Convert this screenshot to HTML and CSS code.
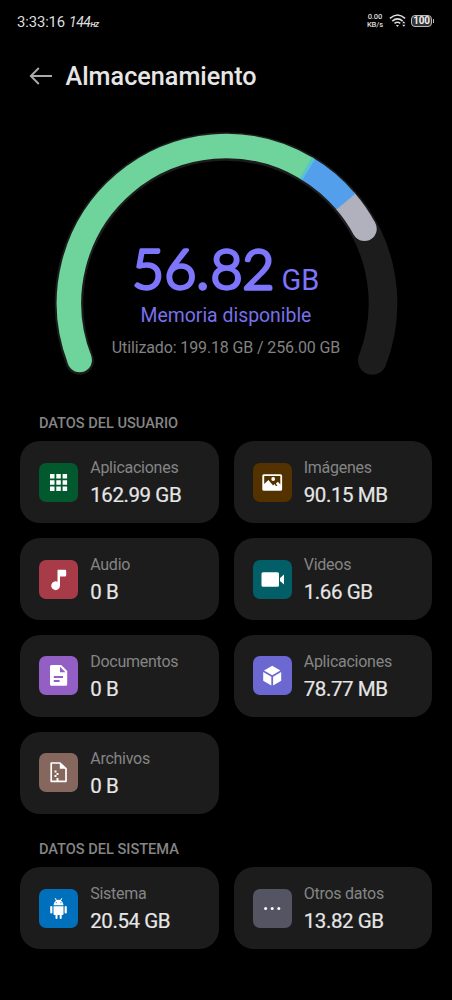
FILE: index.html
```html
<!DOCTYPE html>
<html lang="es">
<head>
<meta charset="utf-8">
<meta name="viewport" content="width=device-width">
<title>Almacenamiento</title>
<link rel="stylesheet" href="styles.css">
</head>
<body>
<div class="status">
  <span class="time">3:33:16</span>
  <span class="rate">144<small>HZ</small></span>
  <span class="speed"><span>0.00</span><span>KB/s</span></span>
  <svg class="wifi" width="18" height="14" viewBox="0 0 18 14">
    <g fill="none" stroke="#ddd" stroke-width="1.6"><path d="M.9 4.3Q8.5-2.3 16.100 4.300"/><path d="M3.300 7.100Q8.500 2.700 13.700 7.100"/><path d="M5.500 9.400Q8.500 7.100 11.300 9.300"/></g>
    <path d="M6.900 11h3l-1.500 1.900zM13.200 9.200l1.600-2 1.600 2zM13.200 10.700h3.200l-1.600 2z" fill="#ddd"/>
  </svg>
  <span class="battery">100</span>
</div>
<header class="header">
  <svg width="24" height="20" viewBox="0 0 24 20" fill="none" stroke="#aaa" stroke-width="1.9"><path d="M23 10H2M9.800 2L1.800 10l8 8"/></svg>
  <h1>Almacenamiento</h1>
</header>
<section class="gauge">
  <svg class="arc" width="360" height="260" viewBox="46 122 360 260" fill="none">
    <path d="M79.700 360.500A157 157 0 1 1 372.300 360.500" stroke="#1c1c1c" stroke-width="28.600" stroke-linecap="round"/>
    <path d="M345 200.600A157 157 0 0 1 364.500 228.800" stroke="#b1b0bd" stroke-width="24.500"/>
    <circle cx="364.500" cy="228.800" r="12.250" fill="#b1b0bd"/>
    <path d="M305.900 167.900A157 157 0 0 1 345.900 201.700" stroke="#549fec" stroke-width="24.500"/>
    <path d="M305.900 167.900L308.700 169.600" stroke="#56c4d3" stroke-width="24.500"/>
    <path d="M79.700 360A157 157 0 0 1 306.100 168" stroke="#6ed49b" stroke-width="24.500"/>
    <circle cx="79.700" cy="360" r="12.250" fill="#6ed49b"/>
  </svg>
  <div class="summary">
    <svg class="free" width="200" height="76" viewBox="126 230 200 76">
      <text class="amount" x="132 164.300 196.300 210.500 242.300" y="288.700">56.82</text>
      <text class="unit" x="281.500" y="289.500">GB</text>
    </svg>
    <p class="available">Memoria disponible</p>
    <p class="used">Utilizado: 199.18 GB / 256.00 GB</p>
  </div>
</section>
<main>
  <h2>DATOS DEL USUARIO</h2>
  <div class="grid">
    <article class="card"><span class="icon green"><svg viewBox="0 0 39 39"><path d="M11 11h4.500v4.500H11zM17.300 11h4.500v4.500h-4.500zM23.600 11h4.500v4.500h-4.500zM11 17.200h4.500v4.500H11zM17.300 17.200h4.500v4.500h-4.500zM23.600 17.200h4.500v4.500h-4.500zM11 23.400h4.500v4.500H11zM17.300 23.400h4.500v4.500h-4.500zM23.600 23.400h4.500v4.500h-4.500z"/></svg></span><div><p>Aplicaciones</p><strong>162.99 GB</strong></div></article>
    <article class="card"><span class="icon brown"><svg viewBox="0 0 39 39"><path fill-rule="evenodd" d="M10.800 11.300h16.800q1.500 0 1.500 1.500v13.500q0 1.500-1.500 1.500H10.800q-1.500 0-1.500-1.500V12.800q0-1.500 1.500-1.500zM11.200 13v8l4.200-4 4.700 5.500 1.400-1.600 1.400 2h1.500l-1.500-2.400 2-1.800 2.400 2.800V13z"/><circle cx="20.200" cy="16" r="1.900"/></svg></span><div><p>Imágenes</p><strong>90.15 MB</strong></div></article>
    <article class="card"><span class="icon red"><svg viewBox="0 0 39 39"><path d="M19 9.800h7q1.200 0 1.200 1.200v4.300q0 1.200-1.200 1.200h-5v9.300a4.400 4.400 0 1 1-2.500-4V10.300q0-.5.500-.5z"/></svg></span><div><p>Audio</p><strong>0 B</strong></div></article>
    <article class="card"><span class="icon teal"><svg viewBox="0 0 39 39"><path d="M10 12.200h14.500q1.500 0 1.500 1.500v11.600q0 1.500-1.500 1.500H10q-1.500 0-1.500-1.500V13.700q0-1.500 1.500-1.500zM27 18l4-3.600v10.200l-4-3.600z"/></svg></span><div><p>Videos</p><strong>1.66 GB</strong></div></article>
    <article class="card"><span class="icon purple"><svg viewBox="0 0 39 39"><path fill-rule="evenodd" d="M12.500 9h9.700l6 6v13.200q0 1.500-1.500 1.500H12.500q-1.500 0-1.500-1.500V10.500Q11 9 12.500 9zM21 10.800v5.500h5.500zM14.800 20.100v1.800h9.200v-1.800zM14.800 24.100v1.800h5.800v-1.800z"/></svg></span><div><p>Documentos</p><strong>0 B</strong></div></article>
    <article class="card"><span class="icon violet"><svg viewBox="0 0 39 39"><path d="M19.200 9.800l8.200 4.700-8.200 4.700-8.200-4.700zM10.200 16.100l8.100 4.700v8.600l-8.100-4.700zM28.200 16.100l-8.100 4.700v8.600l8.100-4.700z"/></svg></span><div><p>Aplicaciones</p><strong>78.77 MB</strong></div></article>
    <article class="card"><span class="icon tan"><svg viewBox="0 0 39 39"><path d="M12.200 10h8.800l6 5.700v12.600h-14.800z" fill="none" stroke="#fff" stroke-width="1.700" stroke-linejoin="round"/><path d="M20.800 10v5.800h6zM15.500 17.500h2v2h-2zM17.500 20h2v2h-2zM15.500 22h2v2h-2zM17.500 25h2v3h-2z"/></svg></span><div><p>Archivos</p><strong>0 B</strong></div></article>
  </div>
  <h2 class="system">DATOS DEL SISTEMA</h2>
  <div class="grid">
    <article class="card"><span class="icon blue"><svg viewBox="0 0 39 39"><path fill-rule="evenodd" d="M14.500 16.200q.2-3.200 2.500-4.700l-1.400-2 .7-.5 1.600 2q1.500-.5 3.200 0l1.600-2 .7.500-1.400 2q2.300 1.500 2.500 4.700zM16.700 13.300v1h1v-1zM21.400 13.300v1h1v-1z"/><path d="M14.500 17.200h10v7.700q0 1-1 1h-.8v3q0 1.100-1 1.100t-1-1.100v-3h-2.200v3q0 1.100-1 1.100t-1-1.100v-3h-1q-1 0-1-1z"/><rect x="11.200" y="17" width="2.200" height="7.500" rx="1"/><rect x="25.600" y="17" width="2.200" height="7.500" rx="1"/></svg></span><div><p>Sistema</p><strong>20.54 GB</strong></div></article>
    <article class="card"><span class="icon gray"><svg viewBox="0 0 39 39"><circle cx="12.600" cy="19.500" r="1.500"/><circle cx="19.200" cy="19.500" r="1.500"/><circle cx="25.800" cy="19.500" r="1.500"/></svg></span><div><p>Otros datos</p><strong>13.82 GB</strong></div></article>
  </div>
</main>
</body>
</html>
```
FILE: styles.css
```css
* { box-sizing: border-box; }
body { margin: 0; width: 452px; height: 1000px; background: #000; color: #e6e6e6; font-family: Roboto, sans-serif; overflow: hidden; }
h1, h2, p { margin: 0; }
.status { display: flex; align-items: center; height: 42px; padding: 0 20px 0 17px; color: #ddd; }
.time { font-size: 14.800px; line-height: 20px; letter-spacing: -.1px; padding-top: 1px; }
.rate { margin-left: 4px; padding-top: 1px; font-size: 14px; font-style: italic; font-weight: 400; letter-spacing: -.5px; }
.rate small { font-size: 7px; font-weight: 700; letter-spacing: -.5px; }
.speed { display: flex; flex-direction: column; margin-left: auto; text-align: center; font-size: 7.600px; line-height: 8px; letter-spacing: -.1px; font-weight: 500; }
.wifi { margin: 0 4px 0 6px; }
.battery { position: relative; width: 21px; height: 12px; border: 1px solid #bbb; border-radius: 4px; background: #333; color: #eee; font-size: 10px; line-height: 10px; font-weight: 700; letter-spacing: -.2px; text-align: center; }
.battery::after { content: ""; position: absolute; right: -3px; top: 3px; width: 1px; height: 4px; background: #bbb; }
.header { display: flex; align-items: center; height: 68px; padding-left: 29px; gap: 12.500px; }
.header h1 { padding-top: 1px; font-size: 25.200px; line-height: 31px; font-weight: 500; }
.gauge { display: grid; height: 304px; justify-items: center; }
.arc { grid-area: 1 / 1; margin-top: 12px; }
.summary { grid-area: 1 / 1; display: flex; flex-direction: column; align-items: center; padding-top: 120px; }
.free { display: block; }
.amount { font-family: Lato, sans-serif; font-size: 55.500px; font-weight: 300; fill: #7d75fb; stroke: #7d75fb; stroke-width: 3.300px; stroke-linejoin: round; }
.unit { font-size: 29px; fill: #7d75fb; }
.available { margin-top: -3px; font-size: 19.400px; line-height: 26px; color: #7870ec; }
.used { margin-top: 8px; font-size: 16px; line-height: 22px; letter-spacing: -.13px; color: #828282; }
main { padding: 0 20px; }
main h2 { height: 27.400px; padding-left: 19px; font-size: 14.600px; line-height: 18px; font-weight: 500; color: #858585; letter-spacing: -.02px; }
main h2.system { margin-top: 26px; }
.grid { display: grid; grid-template-columns: 1fr 1fr; gap: 14.800px 15px; }
.card { display: flex; align-items: center; height: 82px; padding-left: 19px; gap: 12.200px; background: #1c1c1c; border-radius: 20px; }
.card p { padding-top: 2px; font-size: 16px; line-height: 24px; letter-spacing: -.25px; color: #858585; }
.card strong { display: block; font-size: 20.500px; line-height: 30px; font-weight: 400; letter-spacing: -.42px; -webkit-text-stroke: .2px; }
.icon { width: 39px; height: 39px; border-radius: 7px; flex: none; }
.icon svg { display: block; width: 39px; height: 39px; fill: #fff; }
.green { background: #02592d; }
.brown { background: #543200; }
.red { background: #a73b47; }
.teal { background: #025e67; }
.purple { background: #945fc4; }
.violet { background: #6c68d1; }
.tan { background: #85675d; }
.blue { background: #0070bd; }
.gray { background: #555462; }
```
